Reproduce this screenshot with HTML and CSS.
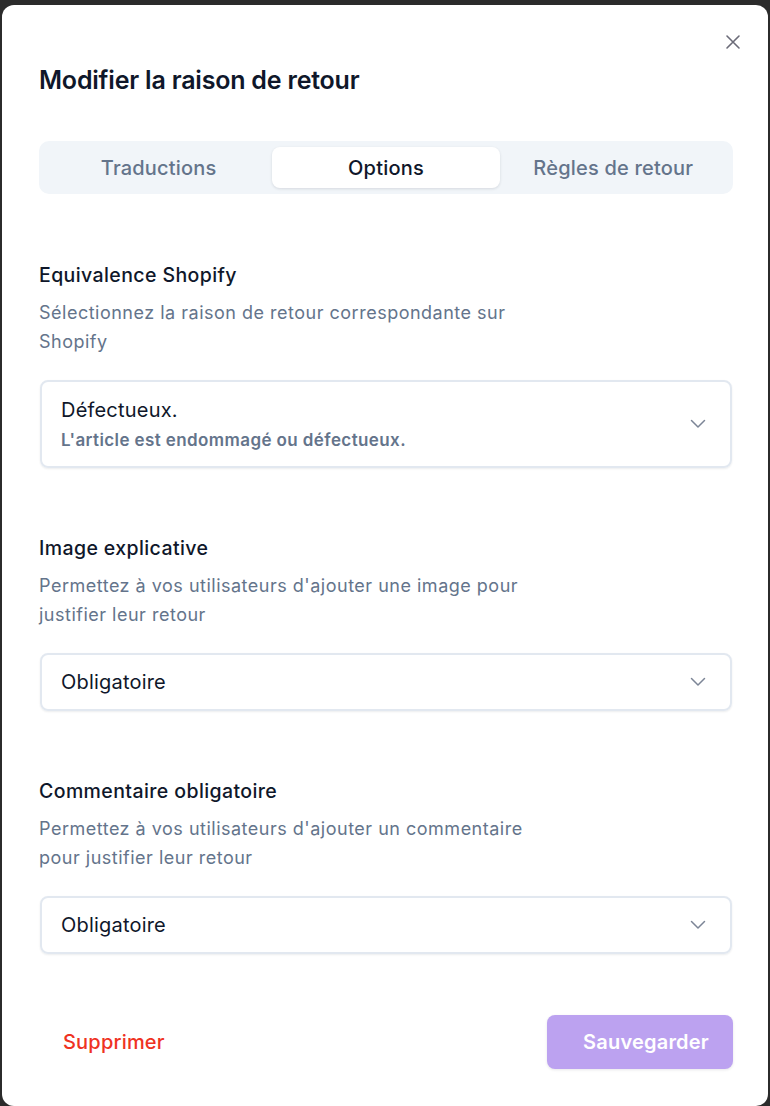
FILE: index.html
```html
<!doctype html>
<html lang="fr">
    <head>
        <meta charset="UTF-8" />
        <meta name="viewport" content="width=device-width, initial-scale=1.0" />
        <title>Modifier la raison de retour</title>
        <link rel="stylesheet" href="styles.css">
    </head>
    <body>
        <div class="modal">
            <div class="modal-top">
                <button class="close-btn" aria-label="Fermer">
                    <svg width="16" height="16" viewBox="0 0 16 16" fill="none" stroke="currentColor" stroke-width="1.6" stroke-linecap="round">
                        <path d="M2 2 L14 14 M14 2 L2 14" />
                    </svg>
                </button>
            </div>
            <h2 class="modal-title">Modifier la raison de retour</h2>

            <div class="tabs">
                <button class="tab">Traductions</button>
                <button class="tab active">Options</button>
                <button class="tab">Règles de retour</button>
            </div>

            <section class="field">
                <h3>Equivalence Shopify</h3>
                <p class="desc">Sélectionnez la raison de retour correspondante sur Shopify</p>
                <div class="select select-tall">
                    <div class="select-value">
                        <span class="value-main">Défectueux.</span>
                        <span class="value-sub">L'article est endommagé ou défectueux.</span>
                    </div>
                    <svg class="chevron" width="16" height="10" viewBox="0 0 16 10" fill="none" stroke="currentColor" stroke-width="1.5" stroke-linecap="round" stroke-linejoin="round">
                        <path d="M1.5 1.5 L8 8 L14.5 1.5" />
                    </svg>
                </div>
            </section>

            <section class="field">
                <h3>Image explicative</h3>
                <p class="desc">Permettez à vos utilisateurs d'ajouter une image pour justifier leur retour</p>
                <div class="select">
                    <span class="value-main">Obligatoire</span>
                    <svg class="chevron" width="16" height="10" viewBox="0 0 16 10" fill="none" stroke="currentColor" stroke-width="1.5" stroke-linecap="round" stroke-linejoin="round">
                        <path d="M1.5 1.5 L8 8 L14.5 1.5" />
                    </svg>
                </div>
            </section>

            <section class="field">
                <h3>Commentaire obligatoire</h3>
                <p class="desc">Permettez à vos utilisateurs d'ajouter un commentaire pour justifier leur retour</p>
                <div class="select">
                    <span class="value-main">Obligatoire</span>
                    <svg class="chevron" width="16" height="10" viewBox="0 0 16 10" fill="none" stroke="currentColor" stroke-width="1.5" stroke-linecap="round" stroke-linejoin="round">
                        <path d="M1.5 1.5 L8 8 L14.5 1.5" />
                    </svg>
                </div>
            </section>

            <footer class="modal-footer">
                <button class="btn-delete">Supprimer</button>
                <button class="btn-save">Sauvegarder</button>
            </footer>
        </div>
    </body>
</html>
```

FILE: styles.css
```css
:root {
    --ink: #0f172a;
    --muted: #64748b;
    --line: #e2e8f0;
    --tab-bg: #f1f5f9;
    --danger: #ef3222;
    --primary-soft: #bca2f0;
    --backdrop: #2b2b2b;
}

* {
    margin: 0;
    padding: 0;
    box-sizing: border-box;
}

body {
    background-color: var(--backdrop);
    font-family: Inter, "Noto Sans", sans-serif;
    color: var(--ink);
    height: 1106px;
    overflow: hidden;
    padding: 5px 2px 0 2px;
}

button {
    font-family: inherit;
    border: none;
    background: none;
    cursor: pointer;
}

.modal {
    background-color: #ffffff;
    border-radius: 12px;
    height: 1101px;
    padding: 25px 35px 0 37px;
}

.modal-top {
    display: flex;
    justify-content: flex-end;
}

.close-btn {
    width: 24px;
    height: 24px;
    display: flex;
    align-items: center;
    justify-content: center;
    color: #6b6b78;
    margin-right: -12px;
}

.modal-title {
    margin-top: 10px;
    font-size: 25px;
    line-height: 32px;
    font-weight: 600;
    letter-spacing: -0.2px;
}

.tabs {
    margin-top: 45px;
    display: grid;
    grid-template-columns: 1fr 1fr 1fr;
    background-color: var(--tab-bg);
    border-radius: 10px;
    padding: 6px;
}

.tab {
    height: 41px;
    font-size: 20px;
    font-weight: 500;
    letter-spacing: 0.2px;
    color: var(--muted);
    border-radius: 8px;
}

.tab.active {
    background-color: #ffffff;
    color: var(--ink);
    box-shadow: 0 1px 3px rgba(15, 23, 42, 0.12);
}

.field {
    margin-top: 68px;
}

.field + .field {
    margin-top: 67px;
}

.field h3 {
    font-size: 19.5px;
    line-height: 26px;
    font-weight: 500;
    letter-spacing: 0.4px;
}

.desc {
    margin-top: 10px;
    font-size: 18px;
    line-height: 29px;
    letter-spacing: 0.5px;
    color: var(--muted);
    max-width: 500px;
}

.select {
    margin-top: 24px;
    margin-left: 1px;
    margin-right: 1px;
    height: 58px;
    border: 2px solid var(--line);
    border-radius: 8px;
    box-shadow: 0 1px 2px rgba(15, 23, 42, 0.08);
    display: flex;
    align-items: center;
    justify-content: space-between;
    padding: 0 24px 0 19px;
}

.select-tall {
    height: 88px;
}

.select-value {
    display: flex;
    flex-direction: column;
    gap: 8px;
}

.value-main {
    font-size: 20px;
    line-height: 24px;
    letter-spacing: 0.2px;
}

.value-sub {
    font-size: 17px;
    line-height: 20px;
    font-weight: 600;
    letter-spacing: 0.4px;
    color: var(--muted);
}

.chevron {
    color: #7c8596;
}

.modal-footer {
    margin-top: 61px;
    display: flex;
    justify-content: space-between;
    align-items: center;
}

.btn-delete {
    color: var(--danger);
    font-size: 20px;
    font-weight: 500;
    letter-spacing: 0.2px;
    padding: 0 24px;
    height: 54px;
}

.btn-save {
    background-color: var(--primary-soft);
    color: #ffffff;
    font-size: 20px;
    font-weight: 600;
    letter-spacing: 0.2px;
    height: 54px;
    width: 186px;
    padding-left: 12px;
    border-radius: 8px;
    box-shadow: 0 1px 3px rgba(15, 23, 42, 0.1);
}
```
